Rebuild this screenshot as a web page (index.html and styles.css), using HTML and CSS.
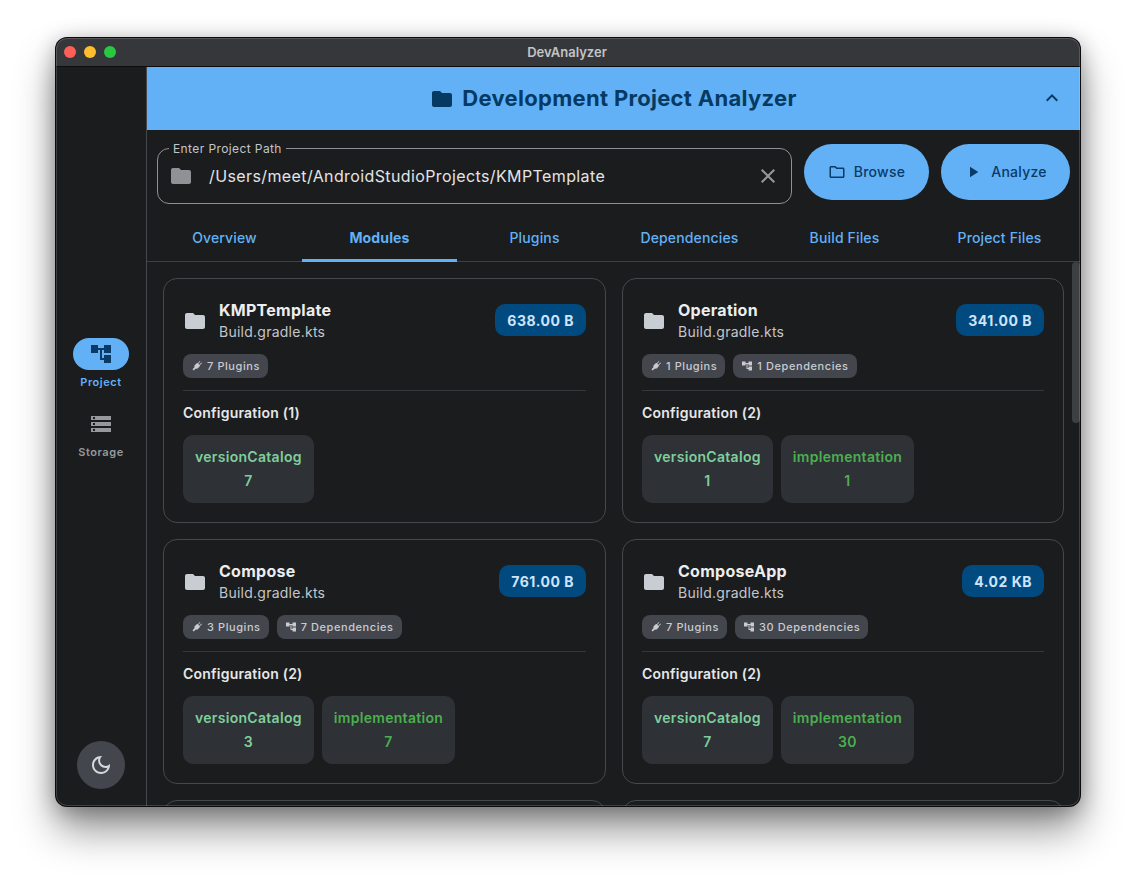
FILE: index.html
```html
<!DOCTYPE html>
<html lang="en">
<head>
  <meta charset="UTF-8">
  <meta name="viewport" content="width=device-width, initial-scale=1.0">
  <title>DevAnalyzer</title>
  <link rel="stylesheet" href="styles.css">
</head>
<body>

  <svg class="defs" width="0" height="0">
    <symbol id="i-folder" viewBox="0 0 24 24"><path d="M10 4H4c-1.1 0-1.99.9-1.99 2L2 18c0 1.1.9 2 2 2h16c1.1 0 2-.9 2-2V8c0-1.1-.9-2-2-2h-8l-2-2z"/></symbol>
    <symbol id="i-folder-line" viewBox="0 0 24 24"><path d="M9.17 6l2 2H20v10H4V6h5.17M10 4H4c-1.1 0-1.99.9-1.99 2L2 18c0 1.1.9 2 2 2h16c1.1 0 2-.9 2-2V8c0-1.1-.9-2-2-2h-8l-2-2z"/></symbol>
    <symbol id="i-tree" viewBox="0 0 24 24"><path d="M22 11V3h-7v3H9V3H2v8h7V8h2v10h4v3h7v-8h-7v3h-2V8h2v3z"/></symbol>
    <symbol id="i-plug" viewBox="0 0 24 24"><path transform="rotate(45 12 12) translate(12 12) scale(.72 1) translate(-12 -12)" d="M16 7V1h-2v6h-4V1H8v6h-.01C6.9 6.99 6 7.89 6 8.99v5.49L9.5 18v5h5v-5l3.5-3.51v-5.5c0-1.1-.9-2-2-2z"/></symbol>
  </svg>

  <div class="window">
    <div class="titlebar">
      <div class="lights">
        <span class="light red"></span>
        <span class="light yellow"></span>
        <span class="light green"></span>
      </div>
      <span class="window-title">DevAnalyzer</span>
    </div>

    <div class="window-body">
      <nav class="sidebar">
        <div class="nav-items">
          <div class="nav-item active">
            <span class="nav-pill"><svg class="nav-icon"><use href="#i-tree"/></svg></span>
            <span class="nav-label">Project</span>
          </div>
          <div class="nav-item">
            <span class="nav-pill">
              <svg class="nav-icon" viewBox="0 0 24 24"><path d="M2 20h20v-4H2v4zm2-3h2v2H4v-2zM2 4v4h20V4H2zm4 3H4V5h2v2zm-4 7h20v-4H2v4zm2-3h2v2H4v-2z"/></svg>
            </span>
            <span class="nav-label">Storage</span>
          </div>
        </div>
        <button class="theme-btn">
          <svg viewBox="0 0 24 24"><path d="M9.37 5.51C9.19 6.15 9.1 6.82 9.1 7.5c0 4.08 3.32 7.4 7.4 7.4.68 0 1.35-.09 1.99-.27C17.45 17.19 14.93 19 12 19c-3.86 0-7-3.14-7-7 0-2.93 1.81-5.45 4.37-6.49zM12 3c-4.97 0-9 4.03-9 9s4.03 9 9 9 9-4.03 9-9c0-.46-.04-.92-.1-1.36-.98 1.37-2.58 2.26-4.4 2.26-2.98 0-5.4-2.42-5.4-5.4 0-1.81.89-3.42 2.26-4.4-.44-.06-.9-.1-1.36-.1z"/></svg>
        </button>
      </nav>

      <main class="main">
        <header class="banner">
          <svg class="banner-icon"><use href="#i-folder"/></svg>
          <h1>Development Project Analyzer</h1>
          <svg class="banner-toggle" viewBox="0 0 24 24"><path d="M12 8l-6 6 1.41 1.41L12 10.83l4.59 4.58L18 14z"/></svg>
        </header>

        <div class="path-row">
          <div class="path-field">
            <span class="path-label">Enter Project Path</span>
            <svg class="path-folder"><use href="#i-folder"/></svg>
            <span class="path-value">/Users/meet/AndroidStudioProjects/KMPTemplate</span>
            <svg class="path-clear" viewBox="0 0 24 24"><path d="M19 6.41L17.59 5 12 10.59 6.41 5 5 6.41 10.59 12 5 17.59 6.41 19 12 13.41 17.59 19 19 17.59 13.41 12z"/></svg>
          </div>
          <button class="action-btn browse"><svg><use href="#i-folder-line"/></svg>Browse</button>
          <button class="action-btn analyze"><svg viewBox="0 0 24 24"><path d="M8 5v14l11-7z"/></svg>Analyze</button>
        </div>

        <div class="tabs">
          <div class="tab">Overview</div>
          <div class="tab active">Modules</div>
          <div class="tab">Plugins</div>
          <div class="tab">Dependencies</div>
          <div class="tab">Build Files</div>
          <div class="tab">Project Files</div>
        </div>

        <div class="content">
          <div class="scrollbar"></div>
          <div class="cards">

            <section class="card">
              <div class="card-head">
                <svg class="card-folder"><use href="#i-folder"/></svg>
                <div class="card-name">
                  <div class="card-title">KMPTemplate</div>
                  <div class="card-file">Build.gradle.kts</div>
                </div>
                <span class="size">638.00 B</span>
              </div>
              <div class="chips">
                <span class="chip"><svg><use href="#i-plug"/></svg>7 Plugins</span>
              </div>
              <div class="config-title">Configuration (1)</div>
              <div class="configs">
                <div class="config catalog"><span>versionCatalog</span><span>7</span></div>
              </div>
            </section>

            <section class="card">
              <div class="card-head">
                <svg class="card-folder"><use href="#i-folder"/></svg>
                <div class="card-name">
                  <div class="card-title">Operation</div>
                  <div class="card-file">Build.gradle.kts</div>
                </div>
                <span class="size">341.00 B</span>
              </div>
              <div class="chips">
                <span class="chip"><svg><use href="#i-plug"/></svg>1 Plugins</span>
                <span class="chip"><svg><use href="#i-tree"/></svg>1 Dependencies</span>
              </div>
              <div class="config-title">Configuration (2)</div>
              <div class="configs">
                <div class="config catalog"><span>versionCatalog</span><span>1</span></div>
                <div class="config impl"><span>implementation</span><span>1</span></div>
              </div>
            </section>

            <section class="card">
              <div class="card-head">
                <svg class="card-folder"><use href="#i-folder"/></svg>
                <div class="card-name">
                  <div class="card-title">Compose</div>
                  <div class="card-file">Build.gradle.kts</div>
                </div>
                <span class="size">761.00 B</span>
              </div>
              <div class="chips">
                <span class="chip"><svg><use href="#i-plug"/></svg>3 Plugins</span>
                <span class="chip"><svg><use href="#i-tree"/></svg>7 Dependencies</span>
              </div>
              <div class="config-title">Configuration (2)</div>
              <div class="configs">
                <div class="config catalog"><span>versionCatalog</span><span>3</span></div>
                <div class="config impl"><span>implementation</span><span>7</span></div>
              </div>
            </section>

            <section class="card">
              <div class="card-head">
                <svg class="card-folder"><use href="#i-folder"/></svg>
                <div class="card-name">
                  <div class="card-title">ComposeApp</div>
                  <div class="card-file">Build.gradle.kts</div>
                </div>
                <span class="size">4.02 KB</span>
              </div>
              <div class="chips">
                <span class="chip"><svg><use href="#i-plug"/></svg>7 Plugins</span>
                <span class="chip"><svg><use href="#i-tree"/></svg>30 Dependencies</span>
              </div>
              <div class="config-title">Configuration (2)</div>
              <div class="configs">
                <div class="config catalog"><span>versionCatalog</span><span>7</span></div>
                <div class="config impl"><span>implementation</span><span>30</span></div>
              </div>
            </section>

            <section class="card card-stub"></section>
            <section class="card card-stub"></section>

          </div>
        </div>
      </main>
    </div>
  </div>

</body>
</html>
```

FILE: styles.css
```css
* {
  box-sizing: border-box;
}

body {
  margin: 0;
  height: 880px;
  overflow: hidden;
  background-color: #ffffff;
  font-family: Inter, "Liberation Sans", sans-serif;
  padding: 38px 56px 0;
}

.defs {
  position: absolute;
}

svg {
  fill: currentColor;
  flex-shrink: 0;
}

.window {
  width: 1024px;
  height: 768px;
  background-color: #1b1c1e;
  border-radius: 11px;
  overflow: hidden;
  display: flex;
  flex-direction: column;
  position: relative;
  box-shadow: 0 0 0 1px #0b0b0c, 0 24px 40px rgba(0, 0, 0, 0.42), 0 4px 22px rgba(0, 0, 0, 0.32);
}

/* thin light edge that macOS draws over the window */
.window::after {
  content: "";
  position: absolute;
  inset: 0;
  border-radius: 11px;
  box-shadow: inset 0 0 0 1px rgba(255, 255, 255, 0.16);
  pointer-events: none;
}

.titlebar {
  height: 29px;
  flex-shrink: 0;
  background-color: #36373b;
  border-bottom: 1px solid #0c0c0d;
  display: flex;
  align-items: center;
  justify-content: center;
  position: relative;
}

.lights {
  position: absolute;
  left: 8px;
  top: 8px;
  display: flex;
  gap: 8px;
}

.light {
  width: 12px;
  height: 12px;
  border-radius: 50%;
}

.red { background-color: #ff5f57; }
.yellow { background-color: #febc2e; }
.green { background-color: #28c840; }

.window-title {
  font-size: 13px;
  font-weight: 600;
  color: #c3c4c6;
  margin-right: 2px;
}

.window-body {
  flex: 1;
  display: flex;
  min-height: 0;
}

/* sidebar */
.sidebar {
  width: 91px;
  flex-shrink: 0;
  border-right: 1px solid #47484c;
  display: flex;
  flex-direction: column;
  align-items: center;
  padding-bottom: 17px;
}

.nav-items {
  flex: 1;
  display: flex;
  flex-direction: column;
  justify-content: center;
  gap: 19px;
  padding-bottom: 11px;
}

.nav-item {
  display: flex;
  flex-direction: column;
  align-items: center;
  gap: 5px;
  color: #96989b;
}

.nav-pill {
  width: 56px;
  height: 32px;
  border-radius: 16px;
  display: flex;
  align-items: center;
  justify-content: center;
}

.nav-icon {
  width: 24px;
  height: 24px;
}

.nav-item.active .nav-pill {
  background-color: #62b1f6;
  color: #0a3a66;
}

.nav-item.active .nav-label {
  color: #62b1f6;
}

.nav-label {
  font-size: 11px;
  line-height: 14px;
  font-weight: 600;
  letter-spacing: 0.55px;
}

.theme-btn {
  width: 48px;
  height: 48px;
  border: none;
  border-radius: 50%;
  background-color: #43464d;
  color: #d5d8dc;
  padding: 12px;
  display: flex;
}

.theme-btn svg {
  width: 24px;
  height: 24px;
}

/* main column */
.main {
  flex: 1;
  min-width: 0;
  display: flex;
  flex-direction: column;
}

.banner {
  height: 63px;
  flex-shrink: 0;
  background-color: #62b1f6;
  color: #063a63;
  display: flex;
  align-items: center;
  justify-content: center;
  gap: 8px;
  position: relative;
}

.banner h1 {
  margin: 0 0 2px;
  font-size: 22px;
  font-weight: 700;
  letter-spacing: 0.3px;
}

.banner-icon {
  width: 24px;
  height: 24px;
}

.banner-toggle {
  position: absolute;
  right: 16px;
  top: 19px;
  width: 24px;
  height: 24px;
}

.path-row {
  display: flex;
  align-items: flex-start;
  gap: 12px;
  padding: 14px 10px 0;
  height: 86px;
  flex-shrink: 0;
}

.path-field {
  flex: 1;
  height: 56px;
  margin-top: 4px;
  border: 1px solid #8e9093;
  border-radius: 12px;
  display: flex;
  align-items: center;
  position: relative;
  padding: 0 12px 0 11px;
}

.path-label {
  position: absolute;
  left: 11px;
  top: -8px;
  padding: 0 4px;
  background-color: #1b1c1e;
  font-size: 12px;
  letter-spacing: 0.4px;
  color: #c3c5c8;
}

.path-folder {
  width: 24px;
  height: 24px;
  color: #8f9195;
  margin-right: 16px;
}

.path-value {
  flex: 1;
  font-size: 16px;
  letter-spacing: 0.39px;
  color: #e3e4e6;
}

.path-clear {
  width: 24px;
  height: 24px;
  color: #97999c;
  margin-right: -1px;
}

.action-btn {
  height: 56px;
  border: none;
  border-radius: 28px;
  background-color: #62b1f6;
  color: #0a3a66;
  font-family: inherit;
  font-size: 14px;
  font-weight: 500;
  letter-spacing: 0.25px;
  display: flex;
  align-items: center;
  justify-content: center;
  gap: 8px;
  padding: 0 0 1px;
}

.action-btn svg {
  width: 18px;
  height: 18px;
}

.browse { width: 125px; }
.analyze { width: 129px; gap: 9px; }

/* tabs */
.tabs {
  height: 46px;
  flex-shrink: 0;
  display: flex;
  padding-right: 3px;
  border-bottom: 1px solid #3f4043;
}

.tab {
  flex: 1;
  display: flex;
  align-items: center;
  justify-content: center;
  font-size: 14px;
  font-weight: 500;
  color: #62b1f6;
  letter-spacing: 0.15px;
  margin-bottom: -1px;
  border-bottom: 3px solid transparent;
}

.tab.active {
  font-weight: 700;
  border-bottom-color: #62b1f6;
}

/* modules */
.content {
  flex: 1;
  min-height: 0;
  overflow: hidden;
  position: relative;
}

.scrollbar {
  position: absolute;
  right: 0;
  top: 0;
  width: 8px;
  height: 161px;
  border-radius: 4px;
  background-color: #3d4043;
}

.cards {
  display: grid;
  grid-template-columns: 443px 442px;
  gap: 16px;
  padding: 16px 16px 0;
}

.card {
  height: 245px;
  border: 1px solid #46484c;
  border-radius: 14px;
  padding: 19px;
}

.card-head {
  display: flex;
  align-items: center;
  gap: 12px;
  padding-top: 2px;
}

.card-folder {
  width: 24px;
  height: 24px;
  color: #c8ccd3;
}

.card-name {
  flex: 1;
}

.card-title {
  font-size: 16px;
  font-weight: 700;
  line-height: 20px;
  letter-spacing: 0.27px;
  color: #eceded;
}

.card-file {
  font-size: 14px;
  line-height: 20px;
  margin-top: 2px;
  letter-spacing: 0.25px;
  color: #c3c6cb;
}

.size {
  height: 32px;
  padding: 0 12px;
  border-radius: 10px;
  background-color: #014a80;
  color: #cfe4fb;
  font-size: 14px;
  font-weight: 700;
  letter-spacing: 0.5px;
  display: flex;
  align-items: center;
  margin-top: -2px;
}

.chips {
  display: flex;
  gap: 8px;
  margin-top: 12px;
  padding-bottom: 12px;
  border-bottom: 1px solid #35373a;
}

.chip {
  height: 24px;
  padding: 0 8px;
  border-radius: 8px;
  background-color: #43464d;
  color: #c8cbd0;
  font-size: 11px;
  font-weight: 500;
  letter-spacing: 0.58px;
  display: flex;
  align-items: center;
  gap: 4px;
}

.chip svg {
  width: 12px;
  height: 12px;
}

.config-title {
  margin-top: 13px;
  font-size: 14px;
  font-weight: 600;
  line-height: 17px;
  letter-spacing: 0.22px;
  color: #e6e7e8;
}

.configs {
  display: flex;
  gap: 8px;
  margin-top: 14px;
}

.config {
  height: 68px;
  padding: 0 12px 2px;
  border-radius: 10px;
  background-color: #2e3135;
  font-size: 14px;
  font-weight: 600;
  letter-spacing: 0.3px;
  display: flex;
  flex-direction: column;
  align-items: center;
  justify-content: center;
  gap: 7px;
}

.config span {
  line-height: 17px;
}

.catalog { color: #7fcf9c; }
.impl { color: #4caf50; }
```
